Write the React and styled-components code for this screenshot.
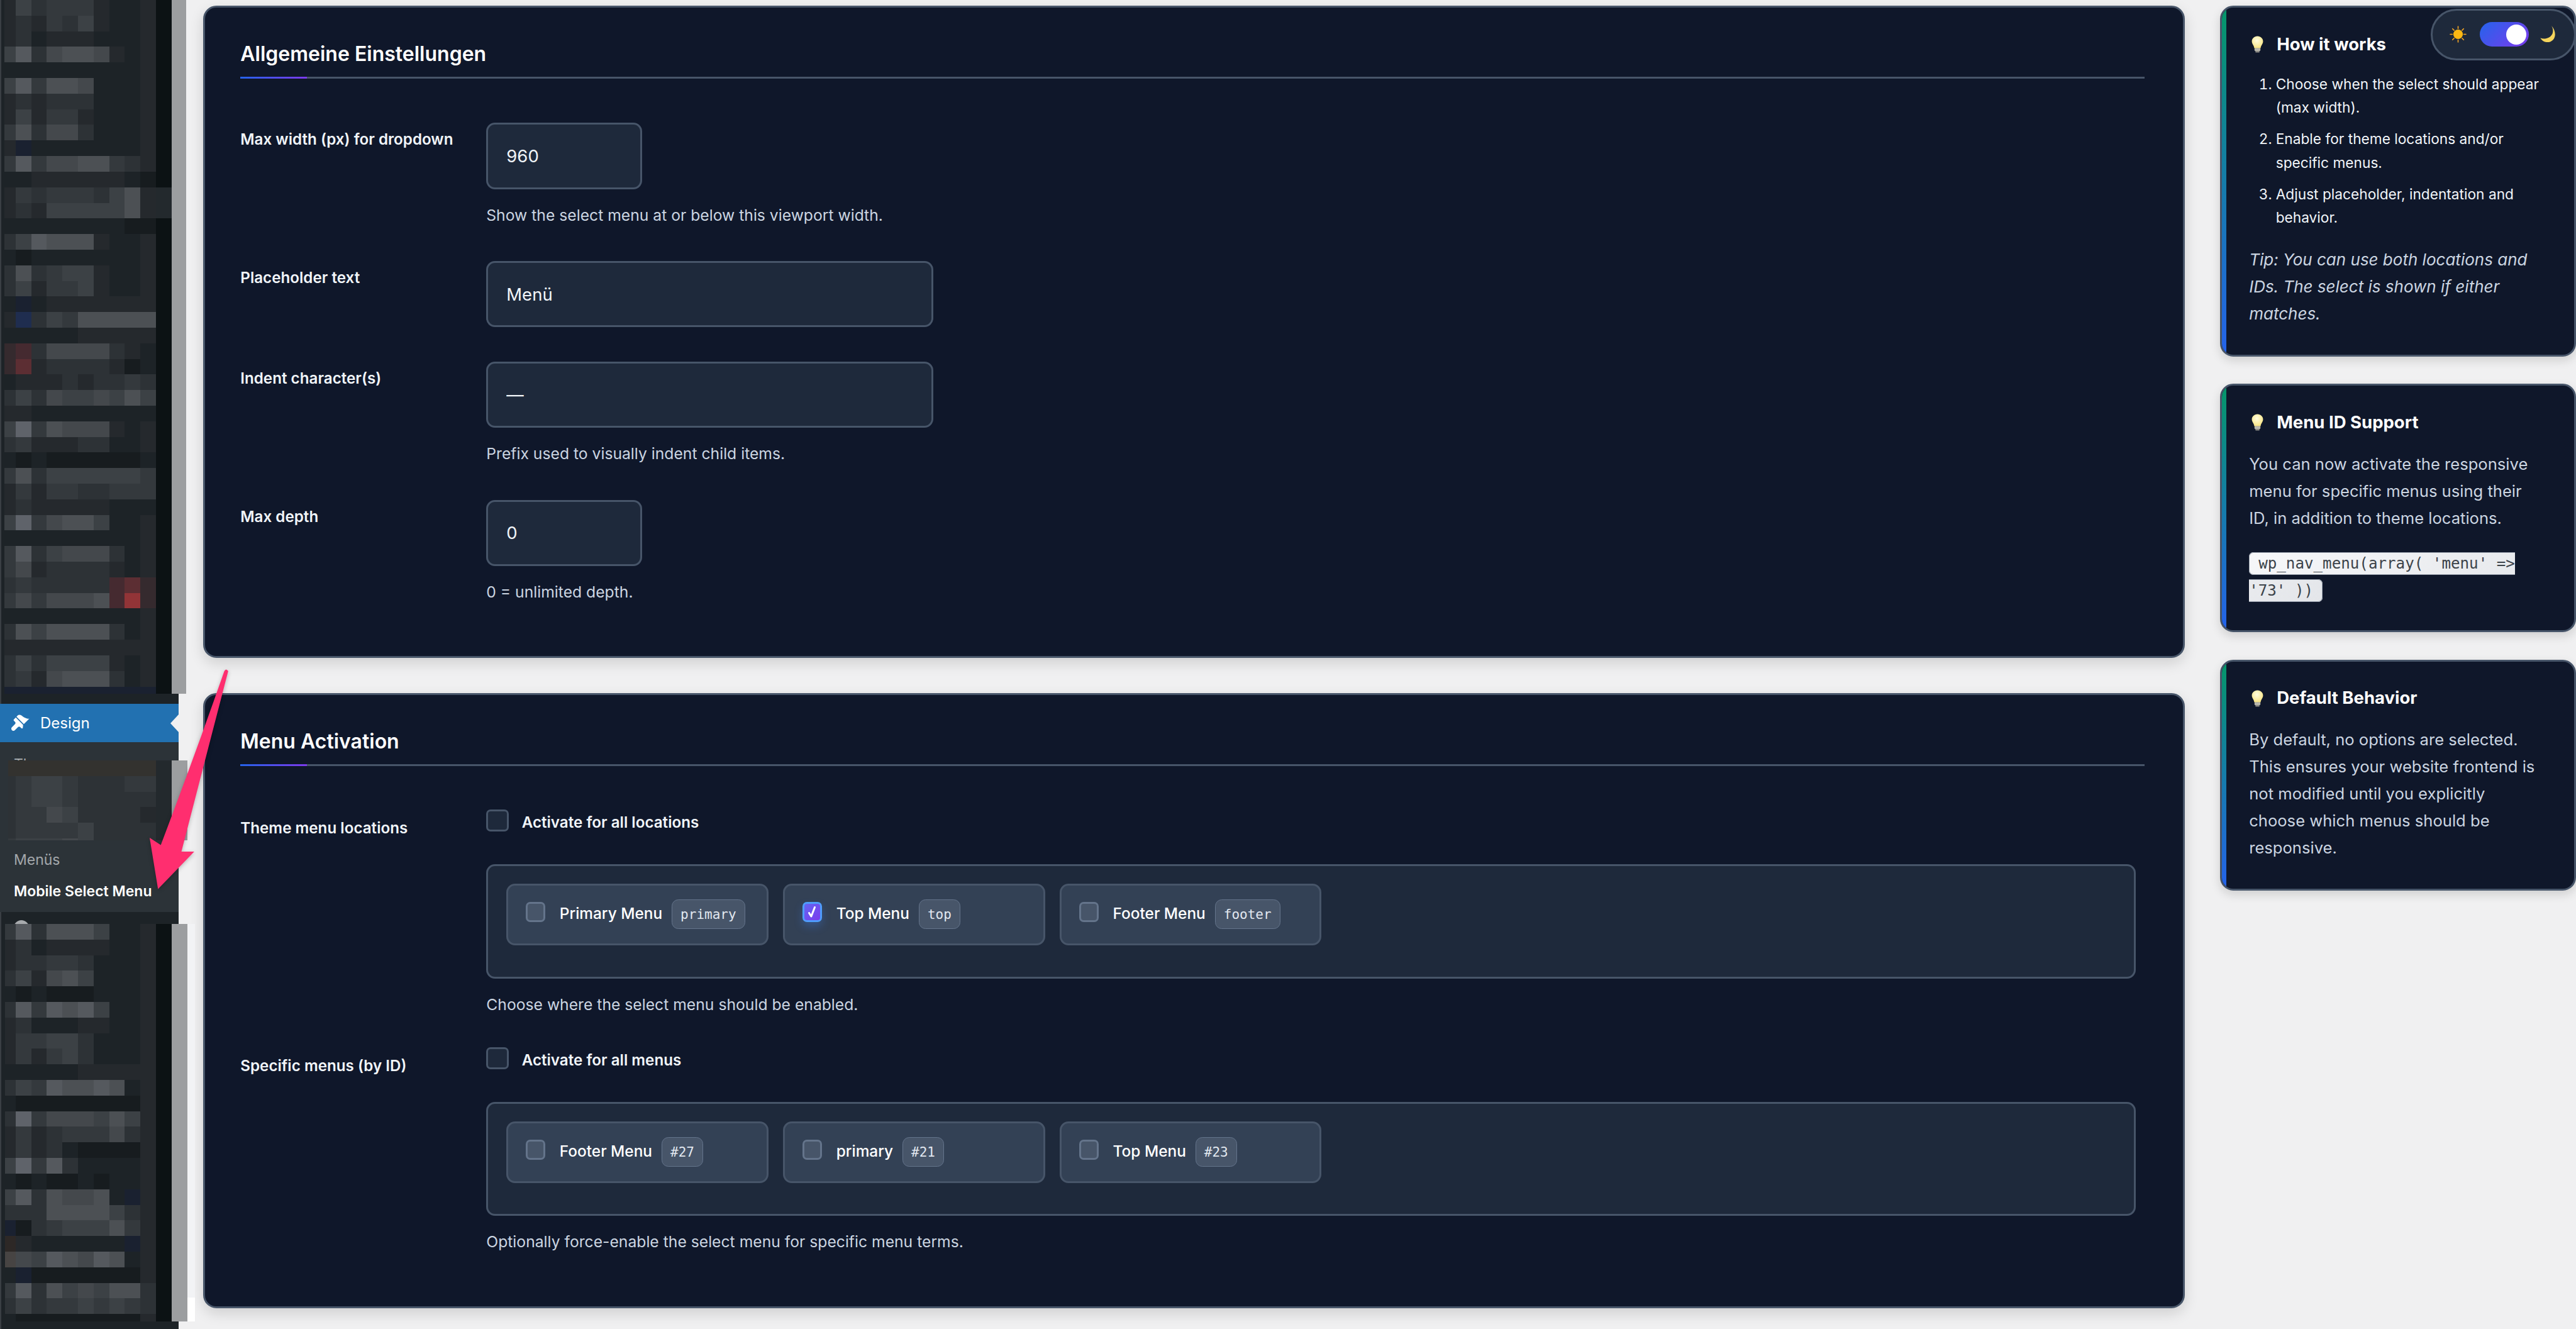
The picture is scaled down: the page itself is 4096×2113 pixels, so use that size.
import React from 'react';
import styled, { createGlobalStyle } from 'styled-components';

const GlobalStyle = createGlobalStyle`
  html, body {
    margin: 0;
    padding: 0;
    background: #f0f0f1;
    font-family: Inter, "Noto Sans", sans-serif;
  }
  * { box-sizing: border-box; }
`;

/* blurred-out admin menu: one char per mosaic cell */
const SHADES = {
  0: '#171c1f', 1: '#1d2327', 2: '#25292d', 3: '#2d3236', 4: '#34393d',
  5: '#3c4145', 6: '#44484c', 7: '#4c5054', 8: '#55595e', 9: '#5f636a',
  x: '#0c1214', y: '#23292d', b: '#1a2130', B: '#1f2d4f', r: '#352a2e',
  R: '#452a30', m: '#5c2e33', M: '#923437', w: '#2d2826', W: '#474443', t: '#33322f',
};

const TOP_ROWS = [
  '2534442112x', '2324352112x', '2312221112x', '5836776212x', '1111111112x',
  '5847761112x', '2323331112x', '2524421112x', '4736631112x', '2b11111112x',
  '4846677432x', '1122222210x', '2434443572y', '2325555572y', '1111111100x',
  '3587772112x', '1011111112x', '3734552112x', '3524452112x', '1b12222222x',
  '2B35477777x', '1111122222x', 'rR36666321x', 'rm23333201x', '1222323343x',
  '3536556575x', '2211111111x', '5947666212x', '3422233112x', '1010000001x',
  '4735555554x', '2424433444x', '2322222111x', '5946775112x', '1111111112x',
  '4835666312x', '4623333212x', '3433333Rmrx', '4646667RMrx', '1111111112x',
  '3757777312x', '2222222222x', '3535555212x', '3426777312x', 'bbbbbbbbbbx',
];

const MID_ROWS = [
  'tttttttttty', '3455433344y', '3455433333y', '3446533332y', '3444453333y', '4555653333y',
];

const LOW_ROWS = [
  '4837775112x', '2312222112x', '2334431112x', '3526751112x', '1010001112x',
  '3848785112x', '2311122112x', '2445531112x', '2424531112x', '1111122222x',
  '3548778712x', '1000000002x', '3946665752x', '2423444632x', '2423100002x',
  '5948311112x', '1010010112x', '58376671b2x', '3337777532x', 'b034555742x',
  'w2111111b2x', 'W658768712x', '1b00000002x', '4837565773x', '3534454543x',
  '1000000002x',
];

const CELL = 28;

function Mosaic({ rows, left, width, height, grayEnd, children }) {
  return (
    <MosaicSvg viewBox={`0 0 ${width} ${height}`} width={width * 0.886} height={height * 0.886} shapeRendering="crispEdges">
      {rows.map((row, r) =>
        row.split('').map((c, i) => {
          const x0 = i === 0 ? left : i * CELL;
          return <rect key={`${r}-${i}`} x={x0} y={r * CELL} width={(i + 1) * CELL - x0} height={CELL} fill={SHADES[c]} />;
        })
      )}
      <rect x={308} y={0} width={grayEnd - 308} height={height} fill="#9c9ea0" />
      {children}
    </MosaicSvg>
  );
}

const MosaicSvg = styled.svg`
  display: block;
  flex-shrink: 0;
  position: relative;
  z-index: 1;
`;

const Page = styled.div`
  position: relative;
  display: flex;
  width: 4096px;
  height: 2113px;
  overflow: hidden;
  background: #f0f0f1;
`;

const AdminMenu = styled.aside`
  display: flex;
  flex-direction: column;
  flex-shrink: 0;
  width: 283.5px;
  height: 100%;
  background: #1d2327;
  box-shadow: inset 2px 0 0 #3a3f44;
`;

const ActiveItem = styled.div`
  position: relative;
  display: flex;
  align-items: center;
  gap: 17px;
  height: 61px;
  margin-top: 16px;
  padding-left: 14px;
  background: #2271b1;
  color: #fff;
  font-size: 24px;
  font-weight: 400;

  &::after {
    content: '';
    position: absolute;
    right: 0;
    top: 16.5px;
    border-style: solid;
    border-width: 14px 13px 14px 0;
    border-color: transparent #f0f0f1 transparent transparent;
  }
`;

const Submenu = styled.div`
  position: relative;
  display: flex;
  flex-direction: column;
  height: 270px;
  padding-top: 10px;
  background: #2c3338;
`;

const SubmenuOverlay = styled.div`
  position: absolute;
  left: 0;
  top: 29px;
`;

const SubItem = styled.div`
  display: flex;
  align-items: center;
  height: 50.5px;
  padding-left: 22px;
  font-size: 23px;
  color: ${(p) => (p.$current ? '#fff' : '#a3a7ab')};
  font-weight: ${(p) => (p.$current ? 600 : 400)};
  margin-top: ${(p) => (p.$skip ? '101px' : '0')};
`;

const LowerMenu = styled.div`
  position: relative;
  padding-top: 18.6px;
`;

const PeekIcon = styled.span`
  position: absolute;
  left: 22px;
  top: 13px;
  width: 24px;
  height: 24px;
  border-radius: 50%;
  background: #a7aaad;
`;

const Arrow = styled.svg`
  position: absolute;
  left: 230.4px;
  top: 1058.8px;
  z-index: 5;
  filter: drop-shadow(0 2px 3px rgba(0, 0, 0, 0.25));
`;

const Content = styled.main`
  display: flex;
  flex: 1;
  gap: 55.8px;
  min-width: 0;
  margin-left: 39.9px;
  padding-top: 9px;
`;

const MainColumn = styled.div`
  display: flex;
  flex-direction: column;
  flex-shrink: 0;
  gap: 56.7px;
  width: 3150.6px;
`;

const SideColumn = styled.div`
  display: flex;
  flex: 1;
  flex-direction: column;
  gap: 43.4px;
  min-width: 0;
`;

const Card = styled.section`
  height: ${(p) => p.$height}px;
  padding: 47px 61px 0 55.9px;
  background: #0f172a;
  border: 3.5px solid #475569;
  border-radius: 21px;
  box-shadow: 0 8px 22px rgba(0, 0, 0, 0.14);
`;

const SectionTitle = styled.h2`
  position: relative;
  margin: 0;
  padding-bottom: 9.7px;
  border-bottom: 3.2px solid #475569;
  color: #fff;
  font-size: 32px;
  font-weight: 600;
  line-height: 53px;

  &::after {
    content: '';
    position: absolute;
    left: 0;
    bottom: -3.2px;
    width: 106px;
    height: 3.2px;
    background: linear-gradient(90deg, #2563eb, #7c3aed);
  }
`;

const Rows = styled.div`
  display: flex;
  flex-direction: column;
  gap: ${(p) => p.$gap}px;
  margin-top: ${(p) => p.$top}px;
`;

const Row = styled.div`
  display: grid;
  grid-template-columns: 391px 1fr;
`;

const RowLabel = styled.div`
  padding-top: ${(p) => p.$offset}px;
  color: #f1f5f9;
  font-size: 24.2px;
  font-weight: 600;
  line-height: 35.4px;
`;

const Field = styled.div`
  min-width: 0;
`;

const TextInput = styled.input`
  display: block;
  width: ${(p) => p.$width}px;
  height: 105.5px;
  padding: 0 29px;
  background: #1e293b;
  border: 3.5px solid #475569;
  border-radius: 14px;
  outline: none;
  color: #f1f5f9;
  font-family: Inter, sans-serif;
  font-size: 27.5px;
`;

const Help = styled.p`
  margin: 24px 0 0;
  color: #cbd5e1;
  font-size: 24.7px;
  line-height: 35.4px;
`;

const CheckRow = styled.label`
  display: flex;
  align-items: center;
  gap: 21px;
  height: 35.4px;
  color: #f1f5f9;
  font-size: 24.2px;
  font-weight: 600;
  line-height: 35.4px;
`;

const CheckText = styled.span`
  padding-top: 7px;
`;

const Box = styled.span`
  display: flex;
  align-items: center;
  justify-content: center;
  flex-shrink: 0;
  width: ${(p) => (p.$small ? 31 : 35.4)}px;
  height: ${(p) => (p.$small ? 32 : 35.4)}px;
  background: ${(p) => (p.$checked ? 'linear-gradient(135deg, #6366f1, #7c3aed)' : p.$small ? '#475569' : '#1e293b')};
  border: 3.2px solid ${(p) => (p.$checked ? '#4f9dfb' : p.$small ? '#64748b' : '#475569')};
  border-radius: 7px;
  box-shadow: ${(p) => (p.$checked ? '0 7px 14px rgba(59, 130, 246, 0.3)' : 'none')};
`;

const ChipGroup = styled.div`
  display: flex;
  gap: 23.5px;
  width: 2622.6px;
  height: ${(p) => p.$height}px;
  margin-top: 52px;
  padding: 28.4px 29px 0;
  background: #1e293b;
  border: 3.5px solid #475569;
  border-radius: 14px;
`;

const Chip = styled.div`
  display: flex;
  align-items: flex-start;
  width: 416.4px;
  height: 97.5px;
  padding: 25.7px 0 0 27.5px;
  background: #334155;
  border: 3.5px solid #475569;
  border-radius: 14px;
`;

const ChipLabel = styled.span`
  margin: 1.3px 0 0 23px;
  color: #fff;
  font-size: 24.4px;
  font-weight: 500;
  line-height: 35.4px;
  white-space: nowrap;
`;

const Tag = styled.code`
  display: flex;
  align-items: center;
  height: 47.8px;
  margin: -4.4px 0 0 15px;
  padding: 0 13px;
  background: #475569;
  border: 1.8px solid #64748b;
  border-radius: 10.6px;
  color: #e2e8f0;
  font-family: "DejaVu Sans Mono", "Liberation Mono", monospace;
  font-size: 21px;
`;

const InfoCard = styled.section`
  position: relative;
  overflow: hidden;
  height: ${(p) => p.$height}px;
  padding: 40.7px 52px 0 43.4px;
  background: #0f172a;
  border: 3.5px solid #475569;
  border-radius: 21px;
  box-shadow: 0 6px 16px rgba(0, 0, 0, 0.14);

  &::before {
    content: '';
    position: absolute;
    left: 0;
    top: 0;
    bottom: 0;
    width: 7px;
    background: linear-gradient(180deg, #059669, #2563eb);
  }
`;

const InfoHeading = styled.h3`
  display: flex;
  align-items: center;
  gap: 21px;
  margin: 0 0 26.6px 4px;
  color: #fff;
  font-size: 27.5px;
  font-weight: 700;
  line-height: 35.4px;
`;

const Steps = styled.ol`
  margin: 0 0 26.6px;
  padding-left: 42.5px;
  color: #f1f5f9;
  font-size: 22.7px;
  line-height: 37.2px;

  li + li {
    margin-top: 13.3px;
  }
`;

const Tip = styled.p`
  margin: 0;
  color: #cbd5e1;
  font-size: 26px;
  font-style: italic;
  line-height: 43px;
`;

const InfoText = styled.p`
  margin: 0;
  color: #cbd5e1;
  font-size: 25.6px;
  line-height: 43px;
`;

const CodeLine = styled.p`
  margin: 30px 0 0;
  font-size: 24.2px;
  line-height: 42.5px;
`;

const Code = styled.code`
  padding: 3px 14px;
  background: linear-gradient(135deg, #f6f7f9, #e4e6ea);
  border: 1.5px solid #9aa2ae;
  border-radius: 7px;
  color: #3c434a;
  font-family: "DejaVu Sans Mono", "Liberation Mono", monospace;
`;

const ThemeToggle = styled.div`
  position: absolute;
  top: 14px;
  right: 0;
  z-index: 6;
  display: flex;
  align-items: center;
  width: 231px;
  height: 81.5px;
  padding-left: 27px;
  background: #1e293b;
  border: 3.5px solid #475569;
  border-radius: 41px;
`;

const Switch = styled.span`
  display: flex;
  align-items: center;
  justify-content: flex-end;
  width: 78px;
  height: 39px;
  margin: 0 17px 0 20.5px;
  padding-right: 4px;
  background: linear-gradient(135deg, #2563eb, #7c3aed);
  border-radius: 20px;
`;

const Knob = styled.span`
  width: 32px;
  height: 32px;
  border-radius: 50%;
  background: #fff;
`;

const BrushIcon = () => (
  <svg width="33" height="33" viewBox="0 0 20 20" fill="#fff">
    <path d="M14.48 11.06L7.41 3.99l1.5-1.5c.5-.56 2.3-.47 3.51.32 1.21.8 1.43 1.28 2.91 2.1 1.18.64 2.45 1.26 4.45.85zm-.71.71L6.7 4.7 4.93 6.47c-.39.39-.39 1.02 0 1.41l1.06 1.06c.59.59.59 1.54 0 2.12l-3 3.04c-.79.78-.79 2.05 0 2.83.78.79 2.05.79 2.83 0l3.04-3c.58-.59 1.53-.59 2.12 0l1.06 1.06c.39.39 1.02.39 1.41 0z" />
  </svg>
);

const Bulb = () => (
  <svg width="19" height="27" viewBox="0 0 19 27">
    <defs>
      <radialGradient id="glass" cx="0.45" cy="0.35" r="0.7">
        <stop offset="0" stopColor="#fffde0" />
        <stop offset="1" stopColor="#f8e27a" />
      </radialGradient>
    </defs>
    <path d="M9.5 0.5C4.4 0.5 0.6 4.2 0.6 8.8c0 4.2 3.3 6.2 3.9 11h10c.6-4.8 3.9-6.8 3.9-11C18.4 4.2 14.6 0.5 9.5 0.5z" fill="url(#glass)" />
    <rect x="4.8" y="19.6" width="9.4" height="4.6" rx="1.4" fill="#b9b7ac" />
    <rect x="6.2" y="24" width="6.6" height="2.6" rx="1.3" fill="#8b8a84" />
  </svg>
);

const Sun = () => (
  <svg width="27" height="27" viewBox="0 0 27 27">
    <g stroke="#f5a623" strokeWidth="1.6" strokeLinecap="round">
      <path d="M13.5 1v3.4M13.5 22.6V26M1 13.5h3.4M22.6 13.5H26M4.7 4.7l2.4 2.4M19.9 19.9l2.4 2.4M4.7 22.3l2.4-2.4M19.9 7.1l2.4-2.4" />
    </g>
    <circle cx="13.5" cy="13.5" r="7.6" fill="#fdb813" />
  </svg>
);

const Moon = () => (
  <svg width="27" height="29" viewBox="0 0 27 29">
    <path d="M19 1c4.8 7.6 2.8 18.4-10 20.4-2.6.4-5.4 0-7.6-1 3 5.4 9.6 8 15.6 6 8.6-2.8 11-15.4 2-25.4z" fill="#f6d55c" />
  </svg>
);

const Check = () => (
  <svg width="16" height="22" viewBox="0 0 16 22" fill="none" stroke="#fff" strokeWidth="3" strokeLinecap="round" strokeLinejoin="round">
    <path d="M3.5 12.5l3.4 5.5L12.5 3.5" />
  </svg>
);

const LOCATIONS = [
  { label: 'Primary Menu', tag: 'primary' },
  { label: 'Top Menu', tag: 'top', checked: true },
  { label: 'Footer Menu', tag: 'footer' },
];

const MENUS = [
  { label: 'Footer Menu', tag: '#27' },
  { label: 'primary', tag: '#21' },
  { label: 'Top Menu', tag: '#23' },
];

function ChipList({ items, height }) {
  return (
    <ChipGroup $height={height}>
      {items.map((item) => (
        <Chip key={item.label}>
          <Box $small $checked={item.checked}>{item.checked && <Check />}</Box>
          <ChipLabel>{item.label}</ChipLabel>
          <Tag>{item.tag}</Tag>
        </Chip>
      ))}
    </ChipGroup>
  );
}

function App() {
  return (
    <Page>
      <GlobalStyle />

      <AdminMenu>
        <Mosaic rows={TOP_ROWS} left={8} width={336} height={1245} grayEnd={334} />
        <ActiveItem>
          <BrushIcon />
          Design
        </ActiveItem>
        <Submenu>
          <SubItem>Themes</SubItem>
          <SubItem $skip>Menüs</SubItem>
          <SubItem $current>Mobile Select Menu</SubItem>
          <SubmenuOverlay>
            <Mosaic rows={MID_ROWS} left={15} width={336} height={143} grayEnd={336} />
          </SubmenuOverlay>
        </Submenu>
        <LowerMenu>
          <PeekIcon />
          <Mosaic rows={LOW_ROWS} left={9} width={350} height={714} grayEnd={336}>
            <rect x={336} y={0} width={14} height={670} fill="#f2f3f5" />
            <rect x={336} y={670} width={14} height={44} fill="#fff" />
          </Mosaic>
        </LowerMenu>
      </AdminMenu>

      <Arrow viewBox="260 1195 155 410" width="137.3" height="363.3">
        <path
          d="M403 1204 Q406 1198 410 1204 Q372 1350 326 1528 L349 1528 L284 1595 L269 1503 L289 1516 Q352 1350 403 1204 Z"
          fill="#ff2e6f"
        />
      </Arrow>

      <Content>
        <MainColumn>
          <Card $height={1036.6}>
            <SectionTitle>Allgemeine Einstellungen</SectionTitle>
            <Rows $gap={54.7} $top={70.5}>
              <Row>
                <RowLabel $offset={9}>Max width (px) for dropdown</RowLabel>
                <Field>
                  <TextInput $width={248} readOnly value="960" />
                  <Help>Show the select menu at or below this viewport width.</Help>
                </Field>
              </Row>
              <Row>
                <RowLabel $offset={9}>Placeholder text</RowLabel>
                <Field>
                  <TextInput $width={711} readOnly value="Menü" />
                </Field>
              </Row>
              <Row>
                <RowLabel $offset={9}>Indent character(s)</RowLabel>
                <Field>
                  <TextInput $width={711} readOnly value="—" />
                  <Help>Prefix used to visually indent child items.</Help>
                </Field>
              </Row>
              <Row>
                <RowLabel $offset={9}>Max depth</RowLabel>
                <Field>
                  <TextInput $width={248} readOnly value="0" />
                  <Help>0 = unlimited depth.</Help>
                </Field>
              </Row>
            </Rows>
          </Card>

          <Card $height={978}>
            <SectionTitle>Menu Activation</SectionTitle>
            <Rows $gap={48.7} $top={68.6}>
              <Row>
                <RowLabel $offset={12}>Theme menu locations</RowLabel>
                <Field>
                  <CheckRow><Box /><CheckText>Activate for all locations</CheckText></CheckRow>
                  <ChipList items={LOCATIONS} height={182.5} />
                  <Help>Choose where the select menu should be enabled.</Help>
                </Field>
              </Row>
              <Row>
                <RowLabel $offset={12}>Specific menus (by ID)</RowLabel>
                <Field>
                  <CheckRow><Box /><CheckText>Activate for all menus</CheckText></CheckRow>
                  <ChipList items={MENUS} height={181} />
                  <Help>Optionally force-enable the select menu for specific menu terms.</Help>
                </Field>
              </Row>
            </Rows>
          </Card>
        </MainColumn>

        <SideColumn>
          <InfoCard $height={558}>
            <InfoHeading><Bulb />How it works</InfoHeading>
            <Steps>
              <li>Choose when the select should appear (max width).</li>
              <li>Enable for theme locations and/or specific menus.</li>
              <li>Adjust placeholder, indentation and behavior.</li>
            </Steps>
            <Tip>Tip: You can use both locations and IDs. The select is shown if either matches.</Tip>
          </InfoCard>

          <InfoCard $height={395}>
            <InfoHeading><Bulb />Menu ID Support</InfoHeading>
            <InfoText>You can now activate the responsive menu for specific menus using their ID, in addition to theme locations.</InfoText>
            <CodeLine><Code>wp_nav_menu(array( 'menu' =&gt; '73' ))</Code></CodeLine>
          </InfoCard>

          <InfoCard $height={367}>
            <InfoHeading><Bulb />Default Behavior</InfoHeading>
            <InfoText>By default, no options are selected. This ensures your website frontend is not modified until you explicitly choose which menus should be responsive.</InfoText>
          </InfoCard>
        </SideColumn>
      </Content>

      <ThemeToggle>
        <Sun />
        <Switch><Knob /></Switch>
        <Moon />
      </ThemeToggle>
    </Page>
  );
}

export default App;
